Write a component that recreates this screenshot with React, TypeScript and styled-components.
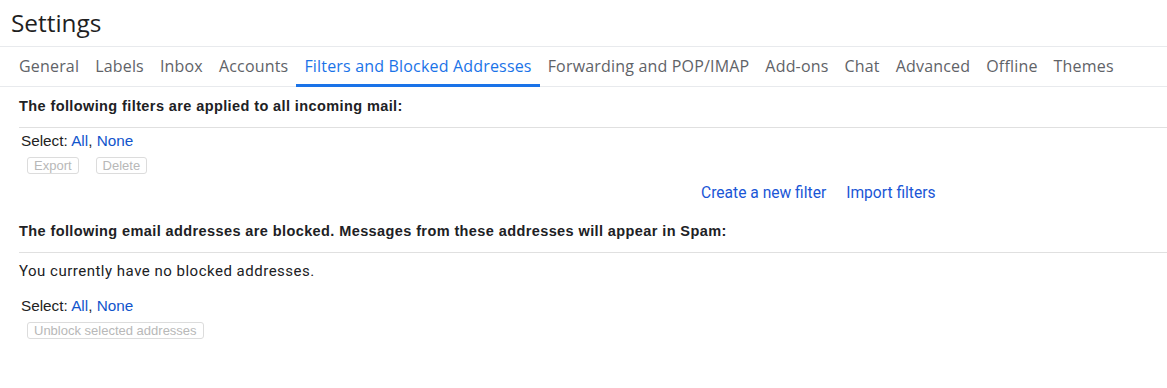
import React from 'react'
import styled, { createGlobalStyle } from 'styled-components'

const GlobalStyle = createGlobalStyle`
  body {
    margin: 0;
    background: #fff;
    font-family: Roboto, "Liberation Sans", Arial, sans-serif;
    color: #202124;
  }
`

const Header = styled.div`
  height: 46px;
  padding-left: 11px;
  display: flex;
  align-items: center;
  border-bottom: 1px solid #e8eaed;
`

const Title = styled.h1`
  margin: 0 0 2px;
  font-family: "Open Sans", Roboto, sans-serif;
  font-size: 24.4px;
  font-weight: 400;
  color: #1f1f1f;
`

const TabBar = styled.nav`
  display: flex;
  height: 39px;
  padding: 0 11px;
  border-bottom: 1px solid #e8eaed;
`

const Tab = styled.a<{ $active?: boolean }>`
  display: flex;
  align-items: center;
  padding: 1px 8px 0;
  font-family: "Open Sans", Roboto, sans-serif;
  font-size: 16px;
  letter-spacing: 0.18px;
  color: ${({ $active }) => ($active ? '#1a73e8' : '#5f6368')};
  border-bottom: 3px solid ${({ $active }) => ($active ? '#1a73e8' : 'transparent')};
  margin-bottom: -1px;
  cursor: pointer;
  white-space: nowrap;
`

const Content = styled.div`
  padding-left: 19px;
`

const SectionHeading = styled.div`
  padding: 11px 0 12px;
  line-height: 17px;
  font-family: "Liberation Sans", Arial, sans-serif;
  font-size: 14.5px;
  font-weight: 700;
  letter-spacing: 0.4px;
  color: #202124;
  border-bottom: 1px solid #e0e0e0;
`

const SelectRow = styled.div<{ $top: number }>`
  margin-top: ${({ $top }) => $top}px;
  padding-left: 2px;
  font-family: "Liberation Sans", Arial, sans-serif;
  font-size: 15.3px;
  line-height: 17px;
  color: #222;
`

const Link = styled.a`
  color: #1155cc;
  cursor: pointer;
`

const ButtonRow = styled.div<{ $top: number }>`
  display: flex;
  gap: 17px;
  margin-top: ${({ $top }) => $top}px;
  padding-left: 8px;
`

const GhostButton = styled.button`
  height: 17px;
  padding: 0 6px;
  border: 1px solid #dcdcdc;
  border-radius: 3px;
  background: #fff;
  font-family: "Liberation Sans", Arial, sans-serif;
  font-size: 13px;
  color: #b8b8b8;
  line-height: 15px;
`

const ActionRow = styled.div`
  display: flex;
  gap: 20px;
  padding-left: 682px;
  margin-top: 11px;
  margin-bottom: 10px;
  line-height: 17px;
`

const ActionLink = styled(Link)`
  font-size: 15.6px;
  color: #1a56d6;
`

const Notice = styled.div`
  margin-top: 10px;
  font-size: 15px;
  letter-spacing: 0.5px;
  line-height: 17px;
  color: #202124;
`

const tabs = [
  'General',
  'Labels',
  'Inbox',
  'Accounts',
  'Filters and Blocked Addresses',
  'Forwarding and POP/IMAP',
  'Add-ons',
  'Chat',
  'Advanced',
  'Offline',
  'Themes',
]

const Select = ({ top }: { top: number }) => (
  <SelectRow $top={top}>
    Select: <Link>All</Link>, <Link>None</Link>
  </SelectRow>
)

export default function App() {
  return (
    <>
      <GlobalStyle />
      <Header>
        <Title>Settings</Title>
      </Header>
      <TabBar>
        {tabs.map((t) => (
          <Tab key={t} $active={t === 'Filters and Blocked Addresses'}>
            {t}
          </Tab>
        ))}
      </TabBar>
      <Content>
        <SectionHeading>The following filters are applied to all incoming mail:</SectionHeading>
        <Select top={4} />
        <ButtonRow $top={8}>
          <GhostButton disabled>Export</GhostButton>
          <GhostButton disabled>Delete</GhostButton>
        </ButtonRow>
        <ActionRow>
          <ActionLink>Create a new filter</ActionLink>
          <ActionLink>Import filters</ActionLink>
        </ActionRow>
        <SectionHeading>
          The following email addresses are blocked. Messages from these addresses will appear in Spam:
        </SectionHeading>
        <Notice>You currently have no blocked addresses.</Notice>
        <Select top={17} />
        <ButtonRow $top={8}>
          <GhostButton disabled>Unblock selected addresses</GhostButton>
        </ButtonRow>
      </Content>
    </>
  )
}
